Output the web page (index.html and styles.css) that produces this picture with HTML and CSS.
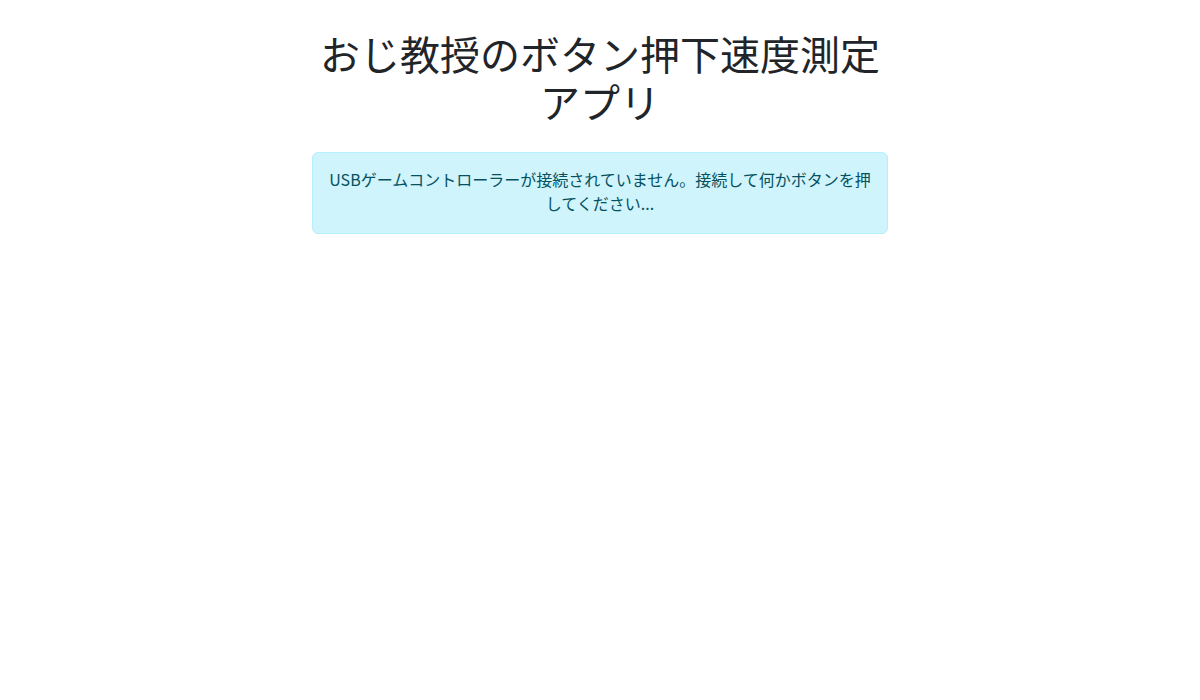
FILE: index.html
```html
<!DOCTYPE html>
<html lang="ja">
<head>
<meta charset="utf-8">
<title>おじ教授のボタン押下速度測定アプリ</title>
<link rel="stylesheet" href="styles.css">
</head>
<body>
<main class="container">
  <h1 class="title">おじ教授のボタン押下速度測定アプリ</h1>
  <div class="alert">USBゲームコントローラーが接続されていません。接続して何かボタンを押してください...</div>
</main>
</body>
</html>
```

FILE: styles.css
```css
* { box-sizing: border-box; }
html, body { margin: 0; padding: 0; background: #fff; }
body {
  font-family: "Noto Sans CJK JP", "Noto Sans", sans-serif;
  color: #212529;
  font-size: 16px;
  line-height: 1.5;
}
.container {
  width: 576px;
  margin: 0 auto;
  padding-top: 29px;
  display: flex;
  flex-direction: column;
}
.title {
  margin: 0 0 27px;
  font-size: 40px;
  font-weight: 400;
  line-height: 48px;
  text-align: center;
  color: #212529;
}
.alert {
  background: #cff4fc;
  border: 1px solid #b6effb;
  border-radius: 6px;
  color: #055160;
  padding: 14px 15px 18px;
  text-align: center;
  line-height: 24px;
}
```
